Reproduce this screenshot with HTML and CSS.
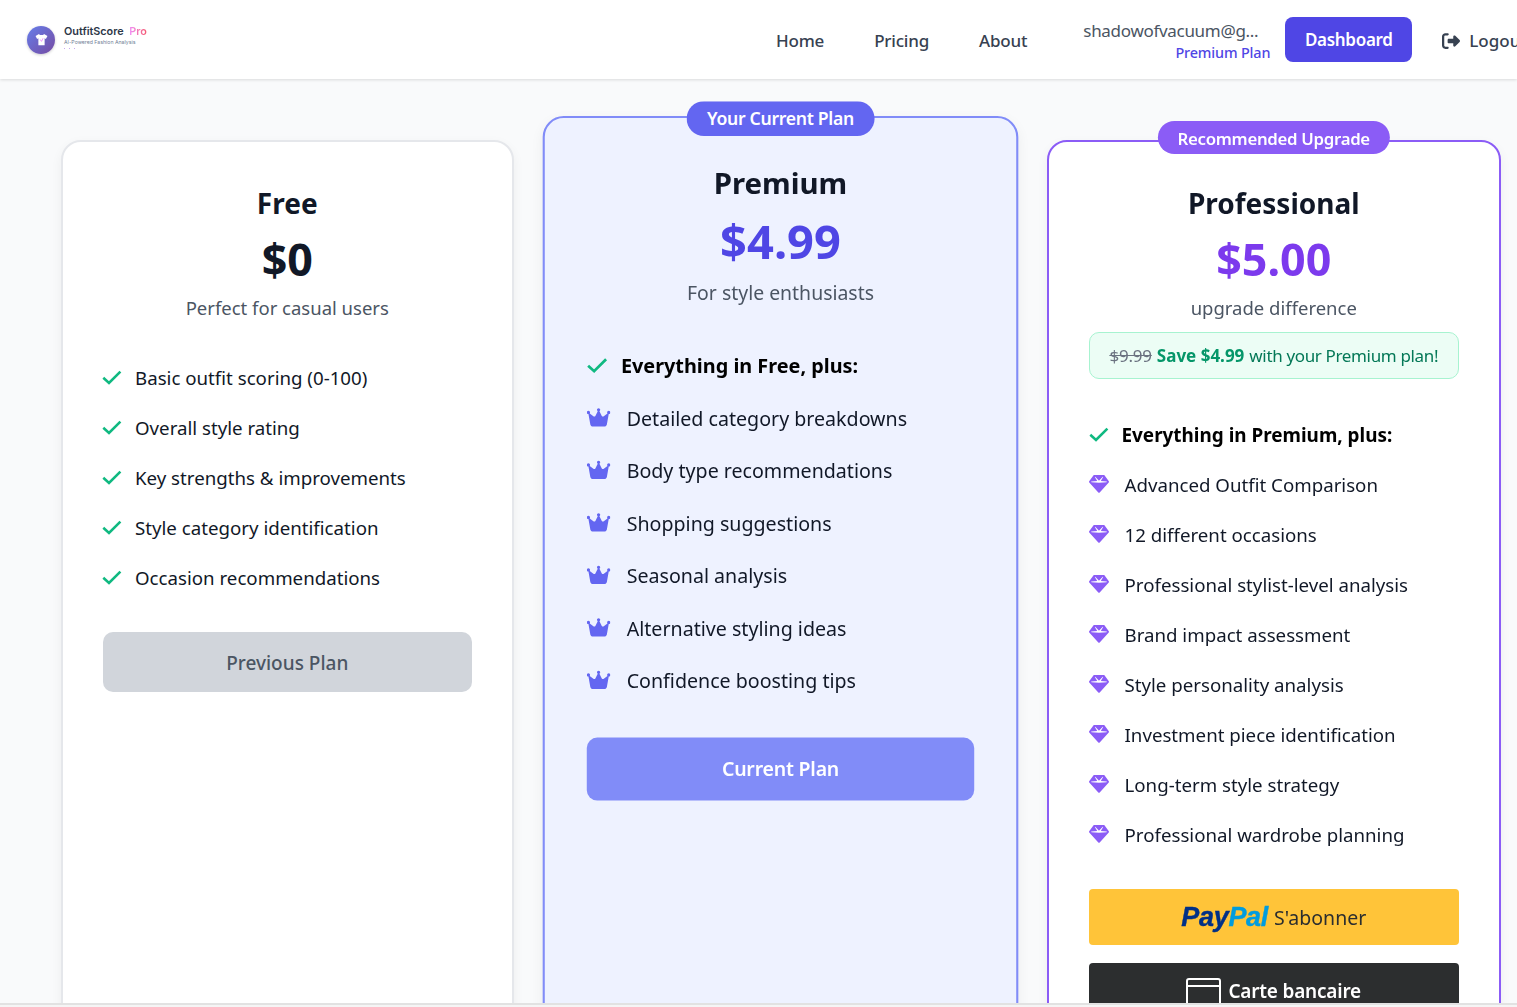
FILE: index.html
```html
<!DOCTYPE html>
<html lang="en">
<head>
<meta charset="utf-8">
<title>OutfitScore Pro - Pricing</title>
<link rel="stylesheet" href="styles.css">
</head>
<body>
<svg class="defs" width="0" height="0" aria-hidden="true">
  <symbol id="crown" viewBox="0 0 576 512"><path d="M309 106c11.4-7 19-19.7 19-34c0-22.1-17.9-40-40-40s-40 17.9-40 40c0 14.4 7.6 27 19 34L209.7 220.6c-9.1 18.2-32.7 23.4-48.6 10.7L72 160c5-6.7 8-15 8-24c0-22.1-17.9-40-40-40S0 113.9 0 136s17.9 40 40 40c.2 0 .5 0 .7 0L86.4 427.4c5.5 30.4 32 52.6 63 52.6H426.6c30.9 0 57.4-22.1 63-52.6L535.3 176c.2 0 .5 0 .7 0c22.1 0 40-17.9 40-40s-17.9-40-40-40s-40 17.9-40 40c0 9 3 17.3 8 24l-89.1 71.3c-15.9 12.7-39.5 7.5-48.6-10.7L309 106z"/></symbol>
  <symbol id="gem" viewBox="0 0 512 512"><path d="M116.7 33.8c4.5-6.1 11.7-9.8 19.3-9.8H376c7.6 0 14.8 3.6 19.3 9.8l112 152c6.8 9.2 6.1 21.9-1.5 30.4l-232 256c-4.5 5-11 7.9-17.8 7.9s-13.2-2.9-17.8-7.9l-232-256c-7.7-8.5-8.3-21.2-1.5-30.4l112-152zm38.5 39.8c-3.3 2.5-4.2 7-2.1 10.5l57.4 95.6L63.3 192c-4.1 .3-7.3 3.8-7.3 8s3.2 7.6 7.3 8l192 16c.4 0 .9 0 1.3 0l192-16c4.1-.3 7.3-3.8 7.3-8s-3.2-7.6-7.3-8L301.5 180.1l57.4-95.6c2.1-3.5 1.2-8-2.1-10.5s-7.9-2-10.7 1L256 169.9 165.9 74.6c-2.8-3-7.4-3.4-10.7-1z"/></symbol>
  <symbol id="check" viewBox="0 0 20 15"><path d="M1.3 7.8 L7 13 L18.4 1.6" fill="none" stroke="currentColor" stroke-width="2.6"/></symbol>
</svg>

<header class="nav">
  <div class="brand">
    <span class="logo">
      <svg class="logo-shirt" viewBox="0 0 24 24"><path d="M8 3 L2.5 6.5 L5 11 L7 10 L7 21 L17 21 L17 10 L19 11 L21.5 6.5 L16 3 C15 5.5 9 5.5 8 3 Z"/><path class="logo-mark" d="M10 12 L12 15 L14.5 10" fill="none" stroke-width="1.5"/></svg>
    </span>
    <div class="brand-text">
      <div class="brand-name">OutfitScore <span class="brand-pro">Pro</span></div>
      <div class="brand-sub">AI-Powered Fashion Analysis</div>
      <div class="brand-dots"><i></i><i></i><i></i></div>
    </div>
  </div>
  <nav class="links">
    <a class="link">Home</a>
    <a class="link">Pricing</a>
    <a class="link">About</a>
  </nav>
  <div class="user">
    <div class="email">shadowofvacuum@g...</div>
    <div class="plan-name">Premium Plan</div>
  </div>
  <a class="dash">Dashboard</a>
  <a class="logout">
    <svg class="logout-icon" viewBox="0 0 512 512"><path d="M377.9 105.9L500.7 228.7c7.2 7.2 11.3 17.1 11.3 27.3s-4.1 20.1-11.3 27.3L377.9 406.1c-6.4 6.4-15 9.9-24 9.9c-18.7 0-33.9-15.2-33.9-33.9l0-62.1-128 0c-17.7 0-32-14.3-32-32l0-64c0-17.7 14.3-32 32-32l128 0 0-62.1c0-18.7 15.2-33.9 33.9-33.9c9 0 17.6 3.6 24 9.9zM160 96L96 96c-17.7 0-32 14.3-32 32l0 256c0 17.7 14.3 32 32 32l64 0c17.7 0 32 14.3 32 32s-14.3 32-32 32l-64 0c-53 0-96-43-96-96L0 128C0 75 43 32 96 32l64 0c17.7 0 32 14.3 32 32s-14.3 32-32 32z"/></svg>
    Logout
  </a>
</header>

<main class="plans">
  <section class="card card-free">
    <h2 class="title">Free</h2>
    <div class="price">$0</div>
    <p class="desc">Perfect for casual users</p>
    <ul class="features">
      <li class="feature"><svg class="ic-check"><use href="#check"/></svg>Basic outfit scoring (0-100)</li>
      <li class="feature"><svg class="ic-check"><use href="#check"/></svg>Overall style rating</li>
      <li class="feature"><svg class="ic-check"><use href="#check"/></svg>Key strengths &amp; improvements</li>
      <li class="feature"><svg class="ic-check"><use href="#check"/></svg>Style category identification</li>
      <li class="feature"><svg class="ic-check"><use href="#check"/></svg>Occasion recommendations</li>
    </ul>
    <button class="btn btn-prev">Previous Plan</button>
  </section>

  <section class="card card-premium">
    <span class="badge badge-premium">Your Current Plan</span>
    <h2 class="title">Premium</h2>
    <div class="price price-premium">$4.99</div>
    <p class="desc">For style enthusiasts</p>
    <ul class="features">
      <li class="feature feature-lead"><svg class="ic-check"><use href="#check"/></svg>Everything in Free, plus:</li>
      <li class="feature"><svg class="ic-crown"><use href="#crown"/></svg>Detailed category breakdowns</li>
      <li class="feature"><svg class="ic-crown"><use href="#crown"/></svg>Body type recommendations</li>
      <li class="feature"><svg class="ic-crown"><use href="#crown"/></svg>Shopping suggestions</li>
      <li class="feature"><svg class="ic-crown"><use href="#crown"/></svg>Seasonal analysis</li>
      <li class="feature"><svg class="ic-crown"><use href="#crown"/></svg>Alternative styling ideas</li>
      <li class="feature"><svg class="ic-crown"><use href="#crown"/></svg>Confidence boosting tips</li>
    </ul>
    <button class="btn btn-current">Current Plan</button>
  </section>

  <section class="card card-pro">
    <span class="badge badge-pro">Recommended Upgrade</span>
    <h2 class="title">Professional</h2>
    <div class="price price-pro">$5.00</div>
    <p class="desc">upgrade difference</p>
    <div class="saving"><s class="saving-old">$9.99</s> <b class="saving-bold">Save $4.99</b> with your Premium plan!</div>
    <ul class="features">
      <li class="feature feature-lead"><svg class="ic-check"><use href="#check"/></svg>Everything in Premium, plus:</li>
      <li class="feature"><svg class="ic-gem"><use href="#gem"/></svg>Advanced Outfit Comparison</li>
      <li class="feature"><svg class="ic-gem"><use href="#gem"/></svg>12 different occasions</li>
      <li class="feature"><svg class="ic-gem"><use href="#gem"/></svg>Professional stylist-level analysis</li>
      <li class="feature"><svg class="ic-gem"><use href="#gem"/></svg>Brand impact assessment</li>
      <li class="feature"><svg class="ic-gem"><use href="#gem"/></svg>Style personality analysis</li>
      <li class="feature"><svg class="ic-gem"><use href="#gem"/></svg>Investment piece identification</li>
      <li class="feature"><svg class="ic-gem"><use href="#gem"/></svg>Long-term style strategy</li>
      <li class="feature"><svg class="ic-gem"><use href="#gem"/></svg>Professional wardrobe planning</li>
    </ul>
    <button class="pay pay-paypal"><span class="pp"><span class="pp-a">Pay</span><span class="pp-b">Pal</span></span> S'abonner</button>
    <button class="pay pay-card">
      <svg class="card-icon" viewBox="0 0 35 28"><rect x="1" y="1" width="33" height="26" rx="2"/><path d="M1 8 H34"/></svg>
      Carte bancaire
    </button>
  </section>
</main>
<div class="bottom-strip"></div>
</body>
</html>
```

FILE: styles.css
```css
* { box-sizing: border-box; }

html, body {
  margin: 0;
  height: 100%;
  overflow: hidden;
}

body {
  background: #f9fafb;
  color: #111827;
  font-family: "Noto Sans", "Open Sans", sans-serif;
}

.defs { position: absolute; }

/* Navigation */
.nav {
  display: flex;
  align-items: center;
  height: 79px;
  padding-left: 27px;
  background: #fff;
  box-shadow: 0 1px 3px rgba(0, 0, 0, .13);
  white-space: nowrap;
  position: relative;
  z-index: 2;
}

.brand {
  display: flex;
  align-items: center;
  flex: 0 0 749px;
  gap: 9px;
  font-family: Inter, sans-serif;
}

.logo {
  display: flex;
  align-items: center;
  justify-content: center;
  width: 28px;
  height: 28px;
  border-radius: 50%;
  background: linear-gradient(135deg, #667eea, #764ba2);
  box-shadow: 0 1px 3px rgba(0, 0, 0, .2);
}

.logo-shirt { width: 15px; height: 15px; fill: #fff; }
.logo-mark { stroke: #f093fb; }

.brand-text { margin-bottom: 3px; }

.brand-name {
  font-size: 10.8px;
  line-height: 13px;
  margin-bottom: 1px;
  font-weight: 600;
  color: #2d3748;
}

.brand-pro {
  margin-left: 3px;
  background: linear-gradient(90deg, #f093fb, #f5576c);
  -webkit-background-clip: text;
  background-clip: text;
  color: transparent;
}

.brand-sub {
  font-size: 5.2px;
  line-height: 7px;
  color: #718096;
}

.brand-dots {
  display: flex;
  gap: 4px;
  height: 6px;
  align-items: center;
}

.brand-dots i {
  width: 1px;
  height: 1px;
  background: #c9a8f0;
}

.links {
  display: flex;
  flex: none;
  gap: 50px;
  margin-top: 2px;
}

.link {
  font-size: 17px;
  letter-spacing: -.2px;
  font-weight: 500;
  color: #374151;
}

.user {
  flex: none;
  margin-left: 56px;
  display: flex;
  flex-direction: column;
  align-items: flex-end;
  width: 187px;
  margin-top: 2px;
}

.email {
  align-self: flex-start;
  font-size: 17px;
  letter-spacing: -.3px;
  line-height: 24px;
  color: #4b5563;
}

.plan-name {
  font-size: 14.4px;
  letter-spacing: -.15px;
  line-height: 20px;
  font-weight: 500;
  color: #4f46e5;
}

.dash {
  display: flex;
  flex: none;
  align-items: center;
  justify-content: center;
  margin-left: 15px;
  width: 127px;
  height: 45px;
  border-radius: 8px;
  background: #4f46e5;
  color: #fff;
  font-size: 17px;
  letter-spacing: -.3px;
  font-weight: 600;
}

.logout {
  display: flex;
  flex: none;
  align-items: center;
  gap: 9px;
  margin-left: 30px;
  margin-top: 2px;
  font-size: 17px;
  font-weight: 500;
  color: #374151;
}

.logout-icon { width: 18px; height: 18px; fill: #374151; }

/* Plans */
.plans {
  display: grid;
  grid-template-columns: 452.5px 453px 454.5px;
  gap: 40px;
  width: 1501px;
  padding: 61px 0 0 61px;
}

.card {
  position: relative;
  min-height: 960px;
  padding: 40px;
  border: 2px solid #e5e7eb;
  border-radius: 20px;
  background: #fff;
  box-shadow: 0 4px 12px rgba(0, 0, 0, .05);
}

.card-premium {
  background: #eef2ff;
  border-color: #818cf8;
  transform: scale(1.05);
}

.card-pro { border-color: #8b5cf6; }

.badge {
  position: absolute;
  top: -21px;
  left: 50%;
  transform: translateX(-50%);
  height: 33px;
  padding: 0 20px;
  border-radius: 17px;
  color: #fff;
  font-size: 16.8px;
  letter-spacing: -.3px;
  line-height: 34px;
  font-weight: 600;
  white-space: nowrap;
}

.badge-premium { top: -16px; background: #6366f1; }
.badge-pro { background: #8b5cf6; line-height: 35px; }

.title {
  margin: -1px 0 0;
  text-align: center;
  font-size: 28px;
  line-height: 44px;
  font-weight: 700;
  color: #111827;
}

.price {
  margin-top: 5px;
  text-align: center;
  font-size: 44.8px;
  line-height: 58px;
  font-weight: 700;
  color: #111827;
}

.price-premium { color: #4f46e5; }
.price-pro { color: #7c3aed; }

.desc {
  margin: 6px 0 0;
  text-align: center;
  font-size: 18.5px;
  line-height: 28px;
  color: #4b5563;
}

.saving {
  display: flex;
  align-items: center;
  justify-content: center;
  gap: 5px;
  height: 47px;
  margin-top: 10px;
  border: 1px solid #a7f3d0;
  border-radius: 10px;
  background: #ecfdf5;
  color: #047857;
  font-size: 17px;
  letter-spacing: -.35px;
  white-space: nowrap;
}

.saving-old { color: #6b7280; letter-spacing: -.2px; }
.saving-bold { color: #059669; font-weight: 700; letter-spacing: 0; }

.features {
  margin: 30px 0 30px;
  padding: 0;
  list-style: none;
}

.feature {
  display: flex;
  align-items: center;
  height: 50px;
  padding-top: 1px;
  font-size: 18.7px;
  color: #111827;
  white-space: nowrap;
}

.feature svg { margin-top: -1px; }

.feature-lead { font-weight: 700; font-size: 18.9px; color: #000; }

.ic-check {
  flex: none;
  width: 20px;
  height: 15px;
  margin-left: -.5px;
  margin-right: 13px;
  color: #10b981;
}

.card-free .ic-check { margin-left: -1px; }
.card-pro .ic-check { margin-left: 0; }

.ic-crown {
  flex: none;
  width: 22.5px;
  height: 20px;
  margin-right: 15.5px;
  fill: #6366f1;
}

.ic-gem {
  flex: none;
  width: 20px;
  height: 20px;
  margin-right: 16px;
  fill: #8b5cf6;
}

.btn {
  display: block;
  width: 100%;
  height: 60px;
  border: 0;
  border-radius: 10px;
  font-family: inherit;
  font-size: 19px;
  font-weight: 500;
}

.btn-prev { padding-top: 2px; background: #d1d5db; color: #4b5563; }

.btn-current {
  padding-bottom: 3px;
  background: #818cf8;
  color: #fff;
  font-weight: 600;
  font-size: 18.6px;
  letter-spacing: -.2px;
}

.pay {
  display: flex;
  align-items: center;
  justify-content: center;
  width: 100%;
  height: 56px;
  border: 0;
  border-radius: 4px;
  font-family: inherit;
  font-size: 19.5px;
}

.pay-paypal { gap: 6px; padding-bottom: 1px; background: #ffc439; color: #2c2e2f; }

.pay-card {
  gap: 7px;
  margin-top: 18px;
  padding-bottom: 2px;
  background: #2c2e2f;
  color: #fff;
  font-weight: 600;
  font-size: 19px;
  letter-spacing: -.2px;
}

.pp {
  font-family: "Liberation Sans", sans-serif;
  font-size: 27px;
  font-weight: 700;
  font-style: italic;
  letter-spacing: -.3px;
  -webkit-text-stroke: .4px currentColor;
}

.pp-a { color: #003087; }
.pp-b { color: #009cde; }

.card-icon {
  width: 35px;
  height: 28px;
  margin-top: 2px;
  fill: none;
  stroke: #fff;
  stroke-width: 2;
}

.bottom-strip {
  position: fixed;
  left: 0;
  right: 0;
  bottom: 0;
  height: 4px;
  background: #f5f5f5;
  border-top: 2px solid #e2e2e2;
  z-index: 3;
}
```
